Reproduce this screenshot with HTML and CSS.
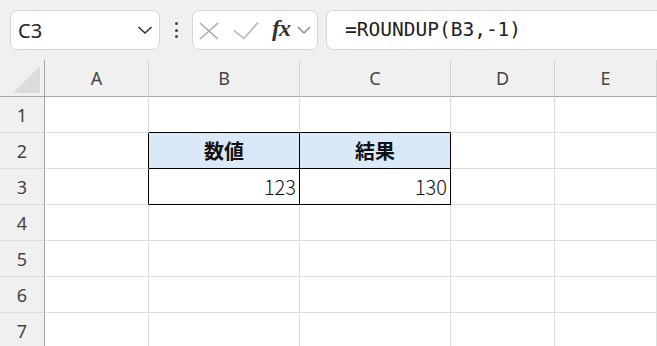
FILE: index.html
```html
<!DOCTYPE html>
<html lang="ja">
<head>
  <meta charset="UTF-8" />
  <title>ROUNDUP</title>
  <link rel="stylesheet" href="styles.css">
</head>
<body>

  <!-- 数式バー -->
  <div class="toolbar">
    <div class="name-box">
      <span>C3</span>
      <svg width="16" height="10" viewBox="0 0 16 10"><path d="M1.5 2 L8 8 L14.5 2" fill="none" stroke="#333" stroke-width="1.6"/></svg>
    </div>
    <div class="dots"><i></i><i></i><i></i></div>
    <div class="fx-box">
      <svg class="fx-icons" width="70" height="40" viewBox="0 0 70 40">
        <path d="M8 13 L26 29 M26 13 L8 29" stroke="#a9a9a9" stroke-width="1.6" fill="none"/>
        <path d="M42 20.5 L52 28.5 L66 12.5" stroke="#b5b5b5" stroke-width="1.6" fill="none"/>
      </svg>
      <span class="fx">fx</span>
      <svg width="16" height="10" viewBox="0 0 16 10"><path d="M2 2 L8 8 L14 2" fill="none" stroke="#888" stroke-width="1.4"/></svg>
    </div>
    <div class="formula">=ROUNDUP(B3,-1)</div>
  </div>

  <!-- シート -->
  <div class="sheet">
    <div class="corner">
      <svg width="28" height="27" viewBox="0 0 28 27"><path d="M0 27 L27 0 L27 27 Z" fill="#dcdcdc"/></svg>
    </div>
    <div class="col-head">A</div>
    <div class="col-head">B</div>
    <div class="col-head">C</div>
    <div class="col-head">D</div>
    <div class="col-head">E</div>

    <div class="row-head">1</div>
    <div class="cell"></div>
    <div class="cell above"></div>
    <div class="cell above"></div>
    <div class="cell"></div>
    <div class="cell"></div>

    <div class="row-head">2</div>
    <div class="cell left-of"></div>
    <div class="cell boxed head">数値</div>
    <div class="cell boxed head">結果</div>
    <div class="cell"></div>
    <div class="cell"></div>

    <div class="row-head">3</div>
    <div class="cell left-of"></div>
    <div class="cell boxed num">123</div>
    <div class="cell boxed num">130</div>
    <div class="cell"></div>
    <div class="cell"></div>

    <div class="row-head">4</div>
    <div class="cell"></div><div class="cell"></div><div class="cell"></div><div class="cell"></div><div class="cell"></div>
    <div class="row-head">5</div>
    <div class="cell"></div><div class="cell"></div><div class="cell"></div><div class="cell"></div><div class="cell"></div>
    <div class="row-head">6</div>
    <div class="cell"></div><div class="cell"></div><div class="cell"></div><div class="cell"></div><div class="cell"></div>
    <div class="row-head">7</div>
    <div class="cell"></div><div class="cell"></div><div class="cell"></div><div class="cell"></div><div class="cell"></div>
  </div>

</body>
</html>
```

FILE: styles.css
```css
body {
  margin: 0;
  background: #f0f0f0;
  font-family: "Noto Sans", "Noto Sans CJK JP", sans-serif;
  overflow: hidden;
  width: 657px;
  height: 346px;
}

.toolbar {
  height: 60px;
  box-sizing: border-box;
  padding: 10px 0 10px 10px;
  display: flex;
  align-items: stretch;
}

.toolbar > * {
  flex-shrink: 0;
}

.name-box,
.fx-box,
.formula {
  background: #fff;
  border: 1px solid #d6d6d6;
  border-radius: 7px;
  box-sizing: border-box;
  height: 40px;
}

.name-box {
  width: 150px;
  display: flex;
  align-items: center;
  justify-content: space-between;
  padding: 0 6px 0 7px;
  font-size: 20px;
  color: #222;
}

.dots {
  width: 32px;
  display: flex;
  flex-direction: column;
  align-items: center;
  justify-content: center;
  gap: 3.5px;
}

.dots i {
  width: 3px;
  height: 3px;
  background: #444;
  border-radius: 50%;
}

.fx-box {
  width: 126px;
  margin-right: 8px;
  display: flex;
  align-items: center;
}

.fx-icons {
  margin-left: -1px;
}

.fx {
  font-family: "Liberation Serif", serif;
  font-style: italic;
  font-weight: bold;
  font-size: 24px;
  color: #333;
  margin: -4px 6px 0 10px;
  letter-spacing: -1px;
}

/* 右端は画面の外まで続く */
.formula {
  flex: 1 1 auto;
  border-right: none;
  border-radius: 7px 0 0 7px;
  padding-left: 18px;
  font-family: "DejaVu Sans Mono", monospace;
  font-size: 19.5px;
  line-height: 38px;
  color: #222;
}

.sheet {
  display: grid;
  grid-template-columns: 45px 104px 151px 151px 104px 1fr;
  grid-template-rows: 37px repeat(7, 36px);
  height: 286px;
  overflow: hidden;
}

.corner {
  display: flex;
  align-items: flex-end;
  justify-content: flex-end;
  padding: 0 3px 3px 0;
  border-right: 1px solid #a8a8a8;
  border-bottom: 1px solid #a8a8a8;
}

.col-head {
  display: flex;
  align-items: center;
  justify-content: center;
  font-size: 18px;
  color: #444;
  border-right: 1px solid #d4d4d4;
  border-bottom: 1px solid #a8a8a8;
}

.row-head {
  display: flex;
  align-items: center;
  justify-content: center;
  font-size: 18px;
  color: #444;
  border-right: 1px solid #a8a8a8;
  border-bottom: 1px solid #dadada;
}

.cell {
  background: #fff;
  border-right: 1px solid #dedede;
  border-bottom: 1px solid #dedede;
  font-family: "Noto Sans CJK JP", sans-serif;
  font-size: 20px;
  color: #111;
  display: flex;
  align-items: center;
}

.cell.above {
  border-bottom-color: #000;
}

.cell.left-of {
  border-right-color: #000;
}

.cell.boxed {
  border-right-color: #000;
  border-bottom-color: #000;
}

.cell.head {
  background: #dae9f8;
  font-weight: bold;
  justify-content: center;
}

.cell.num {
  justify-content: flex-end;
  padding-right: 3px;
  font-weight: 300;
}
```
